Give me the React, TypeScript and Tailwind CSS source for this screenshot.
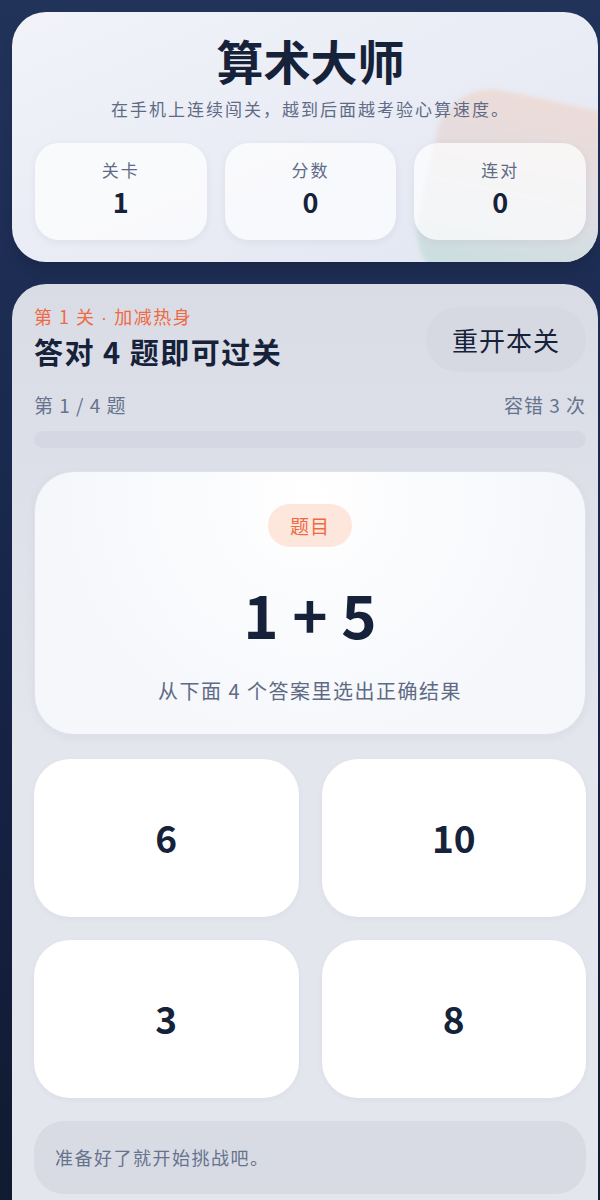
const stats = [
  { label: "关卡", value: 1 },
  { label: "分数", value: 0 },
  { label: "连对", value: 0 },
];

const answers = [6, 10, 3, 8];

export default function App() {
  return (
    <div
      className="min-h-screen bg-gradient-to-b from-[#22335a] via-[#17254a] to-[#101a30] pl-3 pr-[2px] pt-3"
      style={{ fontFamily: '"Noto Sans CJK SC", "Noto Sans", sans-serif' }}
    >
      {/* 顶部信息卡 */}
      <div className="relative h-[250px] overflow-hidden rounded-[34px] bg-gradient-to-br from-[#f1f3f9] to-[#e2e6f1] pl-[23px] pr-3 pt-[18px] shadow-lg">
        <div className="absolute left-[412px] top-[96px] h-[200px] w-[300px] rotate-[12deg] rounded-[56px] bg-gradient-to-b from-[#eddcd8] via-[#dfdde3] to-[#c6dfdf] blur-[2px]" />
        <div className="relative">
          <h1 className="text-center text-[47px] font-bold leading-[60px] text-[#16213a]">算术大师</h1>
          <p className="mt-[7px] text-center text-[17px] leading-6 tracking-[2px] text-[#5f6b85]">
            在手机上连续闯关，越到后面越考验心算速度。
          </p>
          <div className="mt-[22px] grid grid-cols-3 gap-[18px]">
            {stats.map((s) => (
              <div
                key={s.label}
                className="flex h-[97px] flex-col items-center rounded-[24px] bg-white/70 pt-[15px] shadow-[0_2px_8px_rgba(30,40,80,0.06)]"
              >
                <span className="text-[17px] leading-6 tracking-[2px] text-[#5f6b85]">{s.label}</span>
                <span className="mt-[4px] text-[27px] font-bold leading-8 text-[#16213a]">{s.value}</span>
              </div>
            ))}
          </div>
        </div>
      </div>

      {/* 游戏区 */}
      <div className="mt-[22px] rounded-t-[34px] bg-gradient-to-b from-[#d9dce5] via-[#e4e6ee] to-[#e4e6ee] pb-6 pl-[22px] pr-3 pt-5">
        <div className="flex items-start justify-between">
          <div>
            <div className="text-[18px] leading-6 tracking-[1.5px] text-[#ef6a44]">
              第 1 关 <span className="font-['Liberation_Sans']">·</span> 加减热身
            </div>
            <div className="mt-[3px] text-[29px] font-bold leading-9 tracking-[1.5px] text-[#16213a]">答对 4 题即可过关</div>
          </div>
          <button className="mt-[3px] h-[65px] w-[160px] rounded-full bg-[#d6d9e2] text-[26px] tracking-[1px] text-[#16213a]">
            重开本关
          </button>
        </div>

        <div className="mt-[21px] flex items-center justify-between text-[19px] leading-6 tracking-[1px] text-[#66738d]">
          <span>第 1 / 4 题</span>
          <span>容错 3 次</span>
        </div>
        <div className="mt-[14px] h-[17px] rounded-full bg-[#d5d8e2]" />

        <div className="mt-[23px] flex h-[264px] flex-col items-center rounded-[40px] border border-[#dde2ec] bg-[radial-gradient(circle_at_50%_10%,#ffffff,#f5f7fb_70%)] pt-[32px] shadow-[0_2px_10px_rgba(30,40,80,0.05)]">
          <span className="rounded-full bg-[#fde7dd] px-[22px] py-[8px] text-[19px] leading-[27px] tracking-[1px] text-[#ef6a44]">题目</span>
          <div className="mt-[28px] text-[60px] font-bold leading-[76px] text-[#16213a]">1 + 5</div>
          <div className="mt-[26px] text-[20px] leading-7 tracking-[1.5px] text-[#5f6b85]">从下面 4 个答案里选出正确结果</div>
        </div>

        <div className="mt-6 grid grid-cols-2 gap-[23px]">
          {answers.map((a) => (
            <button
              key={a}
              className="flex h-[158px] items-center justify-center rounded-[36px] bg-white text-[37px] font-bold text-[#16213a] shadow-[0_2px_6px_rgba(30,40,80,0.04)]"
            >
              {a}
            </button>
          ))}
        </div>

        <div className="mt-[23px] flex h-[73px] items-center rounded-[30px] bg-[#d8dbe4] px-[21px] text-[18px] tracking-[1.5px] text-[#66738d]">
          准备好了就开始挑战吧。
        </div>
      </div>
    </div>
  );
}
